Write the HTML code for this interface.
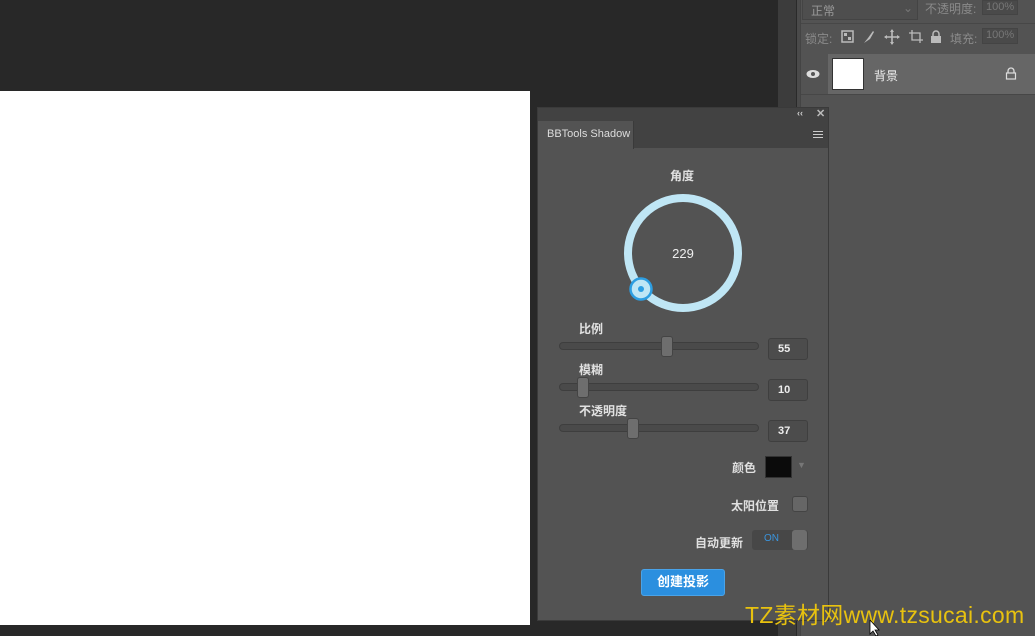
<!DOCTYPE html>
<html><head><meta charset="utf-8"><style>
*{margin:0;padding:0;box-sizing:border-box}
body{width:1035px;height:636px;background:#282828;position:relative;overflow:hidden;font-family:"Liberation Sans","Noto Sans CJK SC",sans-serif;}
.a{position:absolute}
.lbl{position:absolute;color:#e0e0e0;font-size:12px;font-weight:bold}
.track{position:absolute;left:559px;width:200px;height:8px;border-radius:4px;background:#4a4a4a;border:1px solid #3e3e3e}
.thumb{position:absolute;width:12px;height:21px;border-radius:3px;background:#6e6e6e;border:1px solid #444}
.inp{position:absolute;left:768px;width:40px;height:22px;background:#4c4c4c;border:1px solid #3f3f3f;border-radius:3px;color:#eee;font-size:11px;font-weight:bold;line-height:20px;padding-left:9px}
.r{position:absolute;color:#8a8a8a;font-size:12px}
</style></head><body>
<div class="a" style="left:0;top:91px;width:530px;height:534px;background:#fff"></div>
<div class="a" style="left:778px;top:0;width:18px;height:636px;background:#3c3c3c"></div>
<div class="a" style="left:796px;top:0;width:1px;height:636px;background:#2a2a2a"></div>
<div class="a" style="left:797px;top:0;width:238px;height:636px;background:#535353"></div>
<div class="a" style="left:797px;top:0;width:4px;height:636px;background:#4a4a4a"></div>
<div class="a" style="left:800px;top:0;width:1px;height:636px;background:#444"></div>
<div class="a" style="left:802px;top:0;width:116px;height:20px;border:1px solid #444;border-top:none;background:#4e4e4e;color:#999;font-size:12px;padding:2px 0 0 8px">正常<span style="position:absolute;right:4px;top:1px;color:#777">⌄</span></div>
<div class="r" style="left:925px;top:0">不透明度:</div>
<div class="a" style="left:982px;top:0;width:36px;height:15px;background:#4a4a4a;border:1px solid #444;color:#777;font-size:11px;padding-left:3px">100%</div>
<div class="a" style="left:801px;top:23px;width:234px;height:1px;background:#474747"></div>
<div class="r" style="left:805px;top:30px">锁定:</div>
<svg class="a" style="left:840px;top:29px" width="105" height="16">
<g fill="#bbb"><rect x="2" y="2" width="11" height="11" fill="none" stroke="#bbb" stroke-width="1.5"/><rect x="4" y="4" width="3" height="3"/><rect x="8" y="8" width="3" height="3"/></g>
<path d="M24 14L28 9L33 2L34 3L30 10Z" fill="#bbb"/>
<path d="M52 1V15M45 8H59" stroke="#bbb" stroke-width="1.6"/><path d="M52 0L50 3H54ZM52 16L50 13H54ZM44 8L47 6V10ZM60 8L57 6V10Z" fill="#bbb"/>
<path d="M69 4H80V14M72 1V11H83" fill="none" stroke="#bbb" stroke-width="1.3"/>
<path d="M93 7V5a3 3 0 016 0v2" fill="none" stroke="#bbb" stroke-width="1.5"/><rect x="91" y="7" width="10" height="7" fill="#bbb"/>
</svg>
<div class="r" style="left:950px;top:30px">填充:</div>
<div class="a" style="left:982px;top:28px;width:36px;height:16px;background:#4a4a4a;border:1px solid #444;color:#777;font-size:11px;padding-left:3px">100%</div>
<div class="a" style="left:801px;top:53px;width:234px;height:41px;background:#535353"></div>
<div class="a" style="left:828px;top:54px;width:207px;height:40px;background:#666"></div>
<svg class="a" style="left:806px;top:69px" width="14" height="10"><ellipse cx="7" cy="5" rx="6.5" ry="4" fill="#ddd"/><circle cx="7" cy="5" r="2" fill="#555"/></svg>
<div class="a" style="left:832px;top:58px;width:32px;height:32px;background:#fff;border:1px solid #333"></div>
<div class="a" style="left:874px;top:67px;color:#eee;font-size:12px">背景</div>
<svg class="a" style="left:1005px;top:67px" width="12" height="13"><path d="M3 6V4a3 3 0 016 0v2" fill="none" stroke="#ddd" stroke-width="1.3"/><rect x="1.5" y="6" width="9" height="6" fill="none" stroke="#ddd" stroke-width="1.2"/></svg>
<div class="a" style="left:801px;top:94px;width:234px;height:1px;background:#474747"></div>
<div class="a" style="left:537px;top:107px;width:292px;height:514px;background:#535353;border:1px solid #3a3a3a"></div>
<div class="a" style="left:538px;top:108px;width:290px;height:13px;background:#424242"></div>
<div class="a" style="left:797px;top:108px;color:#ccc;font-size:9px;font-weight:bold">‹‹</div>
<div class="a" style="left:816px;top:107px;color:#bbb;font-size:11px;font-weight:bold">✕</div>
<div class="a" style="left:538px;top:121px;width:290px;height:27px;background:#424242"></div>
<div class="a" style="left:538px;top:121px;width:96px;height:28px;background:#535353;border-right:1px solid #3a3a3a;color:#ddd;font-size:11px;padding:7px 0 0 9px">BBTools Shadow</div>
<div class="a" style="left:813px;top:131px;width:10px;height:7px;border-top:1px solid #ccc;border-bottom:1px solid #ccc"><div style="margin-top:2px;border-top:1px solid #ccc"></div></div>
<div class="lbl" style="left:670px;top:167px">角度</div>
<svg class="a" style="left:620px;top:190px" width="126" height="126"><circle cx="63" cy="63" r="55" fill="none" stroke="#bfe6f5" stroke-width="8"/><circle cx="21" cy="99" r="10.5" fill="#bfe6f5" stroke="#2d9ee2" stroke-width="2.5"/><circle cx="21" cy="99" r="3" fill="#2d9ee2"/><text x="63" y="68" fill="#eee" font-size="13" text-anchor="middle" font-family="Liberation Sans">229</text></svg>
<div class="lbl" style="left:579px;top:320px">比例</div>
<div class="track" style="top:342px"></div><div class="thumb" style="left:661px;top:336px"></div>
<div class="inp" style="top:338px">55</div>
<div class="lbl" style="left:579px;top:361px">模糊</div>
<div class="track" style="top:383px"></div><div class="thumb" style="left:577px;top:377px"></div>
<div class="inp" style="top:379px">10</div>
<div class="lbl" style="left:579px;top:402px">不透明度</div>
<div class="track" style="top:424px"></div><div class="thumb" style="left:627px;top:418px"></div>
<div class="inp" style="top:420px">37</div>
<div class="lbl" style="left:732px;top:459px">颜色</div>
<div class="a" style="left:765px;top:456px;width:27px;height:22px;background:#0b0b0b;border:1px solid #333"></div>
<div class="a" style="left:797px;top:460px;color:#777;font-size:9px">▼</div>
<div class="lbl" style="left:731px;top:497px">太阳位置</div>
<div class="a" style="left:792px;top:496px;width:16px;height:16px;background:#666;border:1px solid #444;border-radius:3px"></div>
<div class="lbl" style="left:695px;top:534px">自动更新</div>
<div class="a" style="left:752px;top:530px;width:56px;height:20px;background:#474747;border-radius:3px;color:#3a95de;font-size:10px;padding:3px 0 0 12px">ON</div>
<div class="a" style="left:792px;top:530px;width:15px;height:20px;background:#6e6e6e;border-radius:3px"></div>
<div class="a" style="left:641px;top:569px;width:84px;height:27px;background:#2b8fdf;border:1px solid #4aa3e8;border-radius:3px;color:#fff;font-size:13px;font-weight:bold;text-align:center;line-height:24px">创建投影</div>
<div class="a" style="left:0;top:625px;width:778px;height:11px;background:#282828"></div>
<div class="a" style="left:745px;top:596px;color:#e8c20f;font-size:23px;letter-spacing:0.3px;font-family:'Liberation Sans','Noto Sans CJK SC',sans-serif">TZ素材网www.tzsucai.com</div>
<svg class="a" style="left:869px;top:620px" width="12" height="16"><path d="M1 0L1 14L4 11L7 16L9 15L6 10L10 10Z" fill="#fff" stroke="#000" stroke-width="0.8"/></svg>
</body></html>
